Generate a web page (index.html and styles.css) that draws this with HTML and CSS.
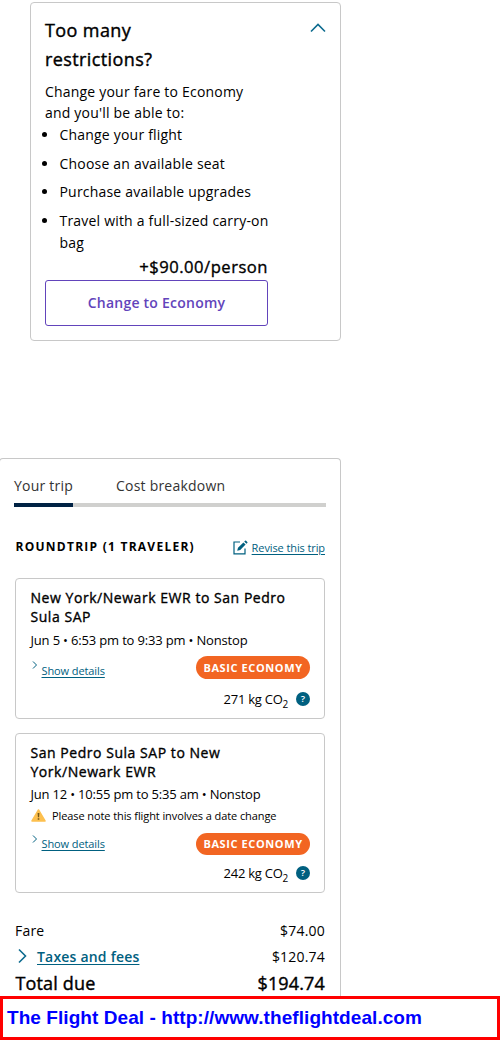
FILE: index.html
```html
<!DOCTYPE html>
<html lang="en">
<head>
<meta charset="utf-8">
<title>Trip summary</title>
<link rel="stylesheet" href="styles.css">
</head>
<body>
<section class="upsell">
  <div class="upsell-body">
    <h2 class="upsell-title">Too many restrictions?</h2>
    <p class="upsell-text">Change your fare to Economy and you'll be able to:</p>
    <ul class="benefits">
      <li><span>Change your flight</span></li>
      <li><span>Choose an available seat</span></li>
      <li><span>Purchase available upgrades</span></li>
      <li><span>Travel with a full-sized carry-on bag</span></li>
    </ul>
    <div class="price">+$90.00/person</div>
    <button class="change">Change to Economy</button>
  </div>
  <svg class="chevron-up" width="16" height="10" viewBox="0 0 16 10"><path d="M1 8.500 8 1.500l7 7" fill="none" stroke="#0c6b8f" stroke-width="1.600"/></svg>
</section>

<section class="trip">
  <nav class="tabs"><a class="tab active">Your trip</a><a class="tab">Cost breakdown</a></nav>
  <div class="trip-head">
    <h3 class="trip-title">ROUNDTRIP (1 TRAVELER)</h3>
    <svg width="15" height="15" viewBox="0 0 15 15"><path d="M7 2H1v11.800h11V8.500" fill="none" stroke="#006080" stroke-width="1.200"/><path d="M4.200 10.800l.8-3L10.400 2.400l2.200 2.200L7.200 10zM11.200 1.600l.9-.9q.5-.5 1 0l1.200 1.200q.5.500 0 1l-.9.9z" fill="#006080"/></svg>
    <a class="link revise">Revise this trip</a>
  </div>

  <article class="flight first">
    <h4 class="route">New York/Newark EWR to San Pedro Sula SAP</h4>
    <p class="times">Jun 5 • 6:53 pm to 9:33 pm • Nonstop</p>
    <div class="detail-row">
      <svg class="small-chevron" width="6" height="8" viewBox="0 0 6 8"><path d="M1 .5 4.500 4 1 7.500" fill="none" stroke="#006080"/></svg>
      <a class="link details">Show details</a>
      <span class="badge">BASIC ECONOMY</span>
    </div>
    <div class="emissions"><span>271 kg CO<span class="subscript">2</span></span><span class="help">?</span></div>
  </article>

  <article class="flight second">
    <h4 class="route">San Pedro Sula SAP to New York/Newark EWR</h4>
    <p class="times">Jun 12 • 10:55 pm to 5:35 am • Nonstop</p>
    <div class="notice">
      <svg width="15" height="13" viewBox="0 0 15 13"><path d="M7.500 1 14 12H1z" fill="#fdc04f" stroke="#fdc04f" stroke-width="1.500" stroke-linejoin="round"/><path d="M6.600 4h1.800l-.3 4.300H6.900zM6.700 9.200h1.600v1.600H6.700z" fill="#755719"/></svg>
      <span>Please note this flight involves a date change</span>
    </div>
    <div class="detail-row">
      <svg class="small-chevron" width="6" height="8" viewBox="0 0 6 8"><path d="M1 .5 4.500 4 1 7.500" fill="none" stroke="#006080"/></svg>
      <a class="link details">Show details</a>
      <span class="badge">BASIC ECONOMY</span>
    </div>
    <div class="emissions"><span>242 kg CO<span class="subscript">2</span></span><span class="help">?</span></div>
  </article>

  <div class="costs">
    <div class="cost"><span>Fare</span><span>$74.00</span></div>
    <div class="cost taxes">
      <span class="tax-label"><svg width="9" height="16" viewBox="0 0 9 16"><path d="M1 1.500 7.500 8 1 14.500" fill="none" stroke="#0c6b8f" stroke-width="1.600"/></svg><a class="link tax-link">Taxes and fees</a></span>
      <span>$120.74</span>
    </div>
    <div class="cost total"><span>Total due</span><span>$194.74</span></div>
  </div>
</section>
<footer class="credit">The Flight Deal - http://www.theflightdeal.com</footer>
</body>
</html>
```
FILE: styles.css
```css
* { box-sizing: border-box; }
body {
  margin: 0;
  height: 1040px;
  overflow: hidden;
  background: #fff;
  color: #000;
  font-family: "Open Sans", "Noto Sans", sans-serif;
  font-size: 14px;
}
h2, h3, h4, p, ul { margin: 0; padding: 0; }

.upsell {
  display: flex;
  justify-content: space-between;
  width: 311px;
  height: 339px;
  margin: 2px 0 0 30px;
  padding: 13px 14px 0;
  border: 1px solid #c8c8c8;
  border-radius: 4px;
}
.upsell-body { width: 223px; }
.upsell-title { width: 150px; font-size: 18px; font-weight: 400; -webkit-text-stroke: .4px; line-height: 29px; letter-spacing: .4px; }
.upsell-text { margin-top: 7px; line-height: 21.4px; letter-spacing: .2px; }
.benefits { list-style: none; letter-spacing: .2px; line-height: 21.5px; }
.benefits li { display: flex; gap: 12.5px; margin: 0 0 7.3px -3px; }
.benefits li::before { content: ""; flex: none; width: 5px; height: 5px; margin-top: 8px; border-radius: 50%; background: #000; }
.benefits li:last-child { margin-bottom: 0; }
.benefits li:last-child span { flex: none; width: 212px; }
.price { height: 27px; line-height: 28px; text-align: right; font-size: 16.6px; -webkit-text-stroke: .35px; letter-spacing: .5px; }
.change {
  display: block;
  width: 223px;
  height: 46px;
  padding: 0 0 1px;
  border: 1px solid #6244bb;
  border-radius: 3px;
  background: #fff;
  color: #6244bb;
  font: 600 14px "Open Sans", sans-serif;
  letter-spacing: .24px;
}
.chevron-up { margin-top: 7px; }

.trip {
  width: 342px;
  height: 538px;
  margin: 117px 0 0 -1px;
  padding: 0 15px 0 16px;
  border: 1px solid #c8c8c8;
  border-bottom: 0;
  border-radius: 4px 4px 0 0;
}
.tabs { display: flex; gap: 43px; width: 312px; height: 48px; margin-left: -2px; border-bottom: 4px solid #d0d0ce; }
.tab { height: 48px; padding-top: 17px; line-height: 20px; color: #333; letter-spacing: .22px; }
.active { border-bottom: 4px solid #002244; }

.trip-head { display: flex; align-items: center; height: 31px; margin-top: 25px; width: 310px; margin-left: -1px; }
.trip-title { flex: 1; margin-top: -2px; padding-left: .5px; font-size: 12px; font-weight: 700; letter-spacing: 1.25px; }
.link { color: #006080; text-decoration: underline; text-underline-offset: 2px; }
.revise { margin-left: 4px; font-size: 11px; letter-spacing: -.1px; }

.flight { width: 310px; margin-left: -1px; padding: 9px 14px 0 14.5px; border: 1px solid #c8c8c8; border-radius: 4px; }
.first { height: 141px; margin-top: 15px; }
.second { height: 160px; margin-top: 14px; }
.route { font-size: 14px; font-weight: 400; -webkit-text-stroke: .35px; line-height: 19px; letter-spacing: .54px; }
.times { height: 22px; margin-top: 4px; line-height: 20px; font-size: 13px; letter-spacing: -.17px; white-space: nowrap; }
.second .times { height: 21px; margin-top: 3px; letter-spacing: -.19px; }
.detail-row { display: flex; height: 23px; margin-top: 4px; }
.second .detail-row { margin-top: 7px; }
.small-chevron { margin: 5px 0 0 1px; }
.details { margin: 5px 0 0 4px; font-size: 11px; line-height: 20px; letter-spacing: -.1px; }
.second .small-chevron { margin-top: 3px; }
.second .details { margin-top: 2px; }
.badge { width: 114px; height: 23px; margin-left: auto; border-radius: 12px; background: #f26522; color: #fff; font-size: 11px; font-weight: 700; line-height: 23px; text-align: center; letter-spacing: .6px; }
.second .badge { height: 22px; margin-top: 1px; line-height: 22px; }
.emissions { display: flex; justify-content: flex-end; align-items: center; gap: 8px; height: 24px; margin-top: 8px; font-size: 13px; letter-spacing: -.25px; }
.second .emissions { margin-top: 6px; }
.subscript { position: relative; top: 4px; font-size: 10px; }
.help { width: 14px; height: 14px; border-radius: 50%; background: #006080; color: #fff; font-size: 9.5px; font-weight: 600; line-height: 14px; text-align: center; letter-spacing: 0; }
.notice { display: flex; align-items: center; gap: 6.5px; height: 20px; font-size: 11px; letter-spacing: -.09px; white-space: nowrap; }

.costs { width: 310px; margin: 25px 0 0 -1px; }
.cost { display: flex; justify-content: space-between; align-items: center; height: 25px; letter-spacing: .2px; }
.taxes { height: 26px; }
.tax-label { display: flex; align-items: center; gap: 10.5px; padding-left: 2.5px; }
.tax-link { font-weight: 600; }
.total { height: 27px; font-size: 18px; -webkit-text-stroke: .4px; letter-spacing: .15px; }
.total span:first-child { padding-left: .5px; }
.credit {
  height: 44px;
  border: 3px solid #f00;
  padding-left: 4px;
  background: #fff;
  color: #00f;
  font: bold 19px/38px "Liberation Sans", Arial, sans-serif;
  letter-spacing: .065px;
  white-space: nowrap;
}
```
